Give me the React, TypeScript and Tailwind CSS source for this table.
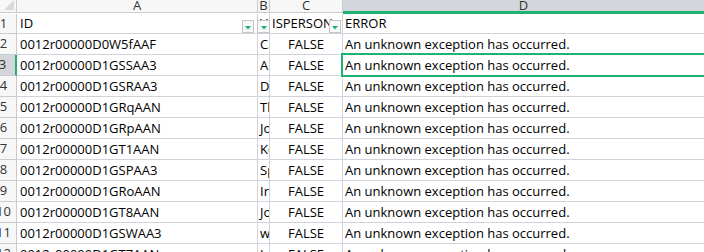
const GRID = 'grid grid-cols-[17px_241px_12px_73px_1fr]';

const ROWS = [
  { n: 2, id: '0012r00000D0W5fAAF', name: 'Carla' },
  { n: 3, id: '0012r00000D1GSSAA3', name: 'Andy' },
  { n: 4, id: '0012r00000D1GSRAA3', name: 'Dan' },
  { n: 5, id: '0012r00000D1GRqAAN', name: 'Thomas' },
  { n: 6, id: '0012r00000D1GRpAAN', name: 'John' },
  { n: 7, id: '0012r00000D1GT1AAN', name: 'Kevin' },
  { n: 8, id: '0012r00000D1GSPAA3', name: 'Spencer' },
  { n: 9, id: '0012r00000D1GRoAAN', name: 'Irene' },
  { n: 10, id: '0012r00000D1GT8AAN', name: 'Joe' },
  { n: 11, id: '0012r00000D1GSWAA3', name: 'walt' },
  { n: 12, id: '0012r00000D1GT7AAN', name: 'Lee' },
];

const ERR = 'An unknown exception has occurred.';

function FilterBtn({ className }: { className: string }) {
  return (
    <span className={`absolute bottom-0 flex h-[13px] items-center justify-center border border-[#c6c6c6] bg-[#f8f8f8] ${className}`}>
      <svg width="6" height="4" viewBox="0 0 6 4" className="mt-[2px]">
        <path d="M0 0h6L3 3.5z" fill="#1fb274" />
      </svg>
    </span>
  );
}

function RowHead({ n, selected }: { n: number; selected?: boolean }) {
  return (
    <div
      className={`flex justify-end overflow-hidden border-b border-[#c8ccd2] text-[#333] ${
        selected ? 'border-r-2 border-r-[#1fb274] bg-[#d3d6db]' : 'border-r bg-[#f7f7f7]'
      }`}
    >
      <span className="w-[25px] shrink-0 text-center">{n}</span>
    </div>
  );
}

export default function App() {
  return (
    <div className="h-[252px] w-[704px] overflow-hidden bg-white font-['Open_Sans',sans-serif] text-[13px] text-black">
      {/* column letters */}
      <div className={`${GRID} h-[13px] leading-[10px] text-[#333]`}>
        <div className="border-r border-b border-[#c8ccd2] bg-[#f7f7f7]">
          <svg width="16" height="12" viewBox="0 0 16 12">
            <path d="M14 0v10H4z" fill="#dadada" />
          </svg>
        </div>
        <div className="border-r border-b border-[#c8ccd2] bg-[#f7f7f7] text-center">A</div>
        <div className="border-r border-b border-[#c8ccd2] bg-[#f7f7f7] text-center">B</div>
        <div className="border-r border-b border-[#c8ccd2] bg-[#f7f7f7] text-center">C</div>
        <div className="border-b-2 border-[#1fb274] bg-[#d3d6db] text-center shadow-[0_1px_0_#1fb274]">D</div>
      </div>

      {/* header row 1 */}
      <div className={`${GRID} h-[21px] pt-[1px] leading-[19px]`}>
        <RowHead n={1} />
        <div className="relative border-r border-b border-[#cfd4dc] pl-[3px]">
          ID
          <FilterBtn className="right-[3px] w-[12px]" />
        </div>
        <div className="relative border-r border-b border-[#cfd4dc] pl-[2px]">
          <span className="block overflow-hidden">V</span>
          <FilterBtn className="-left-px w-[13px]" />
        </div>
        <div className="relative overflow-hidden border-r border-b border-[#cfd4dc] pl-[2px] whitespace-nowrap">
          ISPERSON
          <FilterBtn className="right-[1px] w-[12px]" />
        </div>
        <div className="border-b border-[#cfd4dc] pl-[2px]">ERROR</div>
      </div>

      {ROWS.map(r => (
        <div key={r.n} className={`${GRID} h-[21px] leading-[19px]`}>
          <RowHead n={r.n} selected={r.n === 3} />
          <div className="overflow-hidden border-r border-b border-[#cfd4dc] pt-[1px] pl-[3px] whitespace-nowrap">{r.id}</div>
          <div className="overflow-hidden border-r border-b border-[#cfd4dc] pt-[1px] pl-[2px] whitespace-nowrap">{r.name}</div>
          <div className="overflow-hidden border-r border-b border-[#cfd4dc] pt-[1px] text-center">FALSE</div>
          <div className="relative border-b border-[#cfd4dc] pt-[1px] pl-[2px] whitespace-nowrap">
            {ERR}
            {r.n === 3 && (
              <span className="absolute -top-[2px] -bottom-[2px] -left-[2px] -right-[2px] border-2 border-[#1fb274]" />
            )}
          </div>
        </div>
      ))}
    </div>
  );
}
